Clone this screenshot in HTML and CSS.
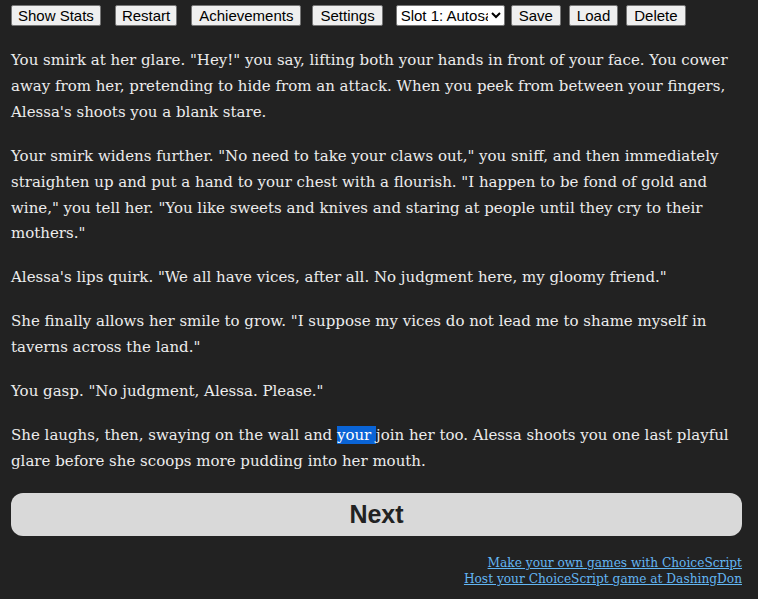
FILE: index.html
```html
<!DOCTYPE html>
<html lang="en">
<head>
  <meta charset="UTF-8">
  <title>Choice Game</title>
  <link rel="stylesheet" href="styles.css">
</head>
<body>

  <div class="container">
    <div class="toolbar">
      <button class="bar-btn first">Show Stats</button>
      <button class="bar-btn first">Restart</button>
      <button class="bar-btn wide">Achievements</button>
      <button class="bar-btn wide">Settings</button>
      <select class="slot">
        <option>Slot 1: Autosave</option>
      </select>
      <button class="bar-btn">Save</button>
      <button class="bar-btn">Load</button>
      <button class="bar-btn">Delete</button>
    </div>

    <div class="story">
      <p>You smirk at her glare. "Hey!" you say, lifting both your hands in front of your face. You cower away from her, pretending to hide from an attack. When you peek from between your fingers, Alessa's shoots you a blank stare.</p>
      <p>Your smirk widens further. "No need to take your claws out," you sniff, and then immediately straighten up and put a hand to your chest with a flourish. "I happen to be fond of gold and wine," you tell her. "You like sweets and knives and staring at people until they cry to their mothers."</p>
      <p>Alessa's lips quirk. "We all have vices, after all. No judgment here, my gloomy friend."</p>
      <p>She finally allows her smile to grow. "I suppose my vices do not lead me to shame myself in taverns across the land."</p>
      <p>You gasp. "No judgment, Alessa. Please."</p>
      <p>She laughs, then, swaying on the wall and <span class="picked">your </span>join her too. Alessa shoots you one last playful glare before she scoops more pudding into her mouth.</p>
    </div>

    <button class="next">Next</button>

    <div class="credits">
      <a href="#">Make your own games with ChoiceScript</a><br>
      <a href="#">Host your ChoiceScript game at DashingDon</a>
    </div>
  </div>

</body>
</html>
```

FILE: styles.css
```css
body {
  margin: 0;
  background-color: #222222;
  color: #ececec;
  font-family: "DejaVu Serif", Georgia, serif;
}

.container {
  padding: 5px 16px 0 11px;
}

.toolbar {
  display: flex;
  align-items: center;
  height: 21px;
}

.bar-btn {
  font-family: "Liberation Sans", Arial, sans-serif;
  font-size: 15px;
  color: #000;
  background-color: #efefef;
  border: 1px solid #767676;
  border-radius: 2px;
  padding: 0 7px;
  height: 21px;
  margin-right: 8px;
}

.bar-btn.first {
  padding: 0 6px;
  margin-right: 14px;
}

.bar-btn.wide {
  margin-right: 11px;
}

.slot {
  font-family: "Liberation Sans", Arial, sans-serif;
  font-size: 15px;
  width: 109px;
  height: 21px;
  margin-left: 2px;
  margin-right: 6px;
  padding: 0;
  background-color: #fff;
  color: #000;
  border: 1px solid #767676;
  border-radius: 2px;
}

.story {
  margin-top: 22px;
  font-size: 15px;
  line-height: 25.9px;
}

.story p {
  margin: 0 0 18px 0;
}

.picked {
  background-color: #0a64d6;
  color: #fff;
}

.next {
  display: block;
  width: 100%;
  height: 43px;
  margin-top: 1px;
  border: none;
  border-radius: 12px;
  background-color: #d9d9d9;
  color: #222;
  font-family: "Liberation Sans", Arial, sans-serif;
  font-weight: bold;
  font-size: 25px;
}

.credits {
  margin-top: 19px;
  text-align: right;
  font-size: 12.2px;
  line-height: 16px;
}

.credits a {
  color: #62b6f3;
}
```
